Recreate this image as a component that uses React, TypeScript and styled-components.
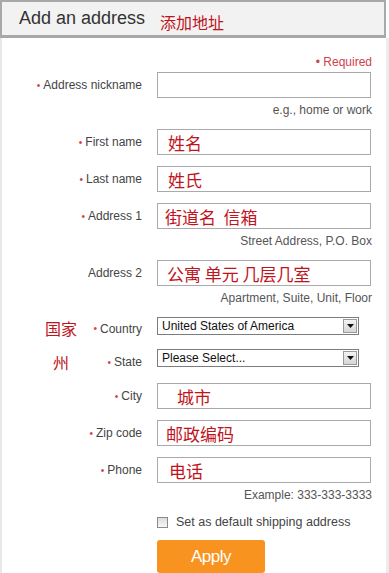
import styled, { createGlobalStyle } from "styled-components";

const GlobalStyle = createGlobalStyle`
  html, body {
    margin: 0;
    padding: 0;
    background: #ffffff;
  }
  body {
    font-family: "Liberation Sans", Arial, sans-serif;
    color: #444444;
  }
`;

type Field = {
  label: string;
  required?: boolean;
  value?: string;
  indent?: number;
  hint?: string;
  top: number;
};

const fields: Field[] = [
  { label: "Address nickname", required: true, hint: "e.g., home or work", top: 3 },
  { label: "First name", required: true, value: "姓名", indent: 10, top: 11 },
  { label: "Last name", required: true, value: "姓氏", indent: 10, top: 11 },
  {
    label: "Address 1",
    required: true,
    value: "街道名  信箱",
    indent: 7,
    hint: "Street Address, P.O. Box",
    top: 11,
  },
  {
    label: "Address 2",
    value: "公寓 单元 几层几室",
    indent: 9,
    hint: "Apartment, Suite, Unit, Floor",
    top: 11,
  },
];

const lowerFields: Field[] = [
  { label: "City", required: true, value: "城市", indent: 19, top: 15 },
  { label: "Zip code", required: true, value: "邮政编码", indent: 8, top: 11 },
  {
    label: "Phone",
    required: true,
    value: "电话",
    indent: 11,
    hint: "Example: 333-333-3333",
    top: 11,
  },
];

function TextRow({ field }: { field: Field }) {
  return (
    <>
      <Row $top={field.top}>
        <Label>
          {field.required && <Dot>•</Dot>}
          {field.label}
        </Label>
        <Input $indent={field.indent ?? 6}>{field.value}</Input>
      </Row>
      {field.hint && <Hint>{field.hint}</Hint>}
    </>
  );
}

function ArrowIcon() {
  return (
    <svg width="7" height="4" viewBox="0 0 7 4">
      <path d="M0 0h7L3.5 4z" fill="#111" />
    </svg>
  );
}

export default function App() {
  return (
    <>
      <GlobalStyle />
      <Panel>
        <Header>
          <Title>Add an address</Title>
          <Note $size={16}>添加地址</Note>
        </Header>
        <Body>
          <Required>• Required</Required>
          {fields.map((f) => (
            <TextRow key={f.label} field={f} />
          ))}
          <SelectRow $top={12}>
            <Label $drop={3}>
              <Side>国家</Side>
              <Dot>•</Dot>Country
            </Label>
            <Select>
              <span>United States of America</span>
              <ArrowBox>
                <ArrowIcon />
              </ArrowBox>
            </Select>
          </SelectRow>
          <SelectRow $top={14}>
            <Label $drop={5}>
              <Side $shift={8}>州</Side>
              <Dot>•</Dot>State
            </Label>
            <Select>
              <span>Please Select...</span>
              <ArrowBox>
                <ArrowIcon />
              </ArrowBox>
            </Select>
          </SelectRow>
          {lowerFields.map((f) => (
            <TextRow key={f.label} field={f} />
          ))}
          <CheckRow>
            <CheckBox />
            <span>Set as default shipping address</span>
          </CheckRow>
          <ButtonRow>
            <ApplyButton>Apply</ApplyButton>
          </ButtonRow>
        </Body>
      </Panel>
    </>
  );
}

const Panel = styled.div`
  width: 389px;
  min-height: 573px;
  box-sizing: border-box;
  display: flex;
  flex-direction: column;
`;

const Header = styled.div`
  width: 386px;
  height: 38px;
  box-sizing: border-box;
  border: 2px solid #a8a8a8;
  border-bottom-width: 3px;
  background: #f2f2f2;
  display: flex;
  align-items: center;
  padding: 2px 0 0 17px;
`;

const Title = styled.span`
  font-size: 18px;
  color: #333333;
  width: 141px;
  margin-top: -2px;
`;

const Note = styled.span<{ $size: number }>`
  font-family: "Noto Sans CJK SC", sans-serif;
  font-size: ${(p) => p.$size}px;
  color: #c0141c;
  line-height: 1;
  margin-top: 5px;
`;

const Body = styled.div`
  flex: 1;
  width: 389px;
  box-sizing: border-box;
  border-left: 2px solid #e8e8e8;
  border-right: 3px solid #ececec;
  padding: 17px 14px 0 0;
  display: flex;
  flex-direction: column;
`;

const Required = styled.div`
  text-align: right;
  font-size: 12px;
  line-height: 14px;
  color: #d0424a;
`;

const Row = styled.div<{ $top: number }>`
  display: grid;
  grid-template-columns: 140px 214px;
  column-gap: 15px;
  margin-top: ${(p) => p.$top}px;
  height: 26px;
`;

const SelectRow = styled(Row)`
  height: 18px;
`;

const Label = styled.div<{ $drop?: number }>`
  position: relative;
  display: flex;
  justify-content: flex-end;
  align-items: center;
  font-size: 12px;
  color: #444444;
  padding-top: ${(p) => p.$drop ?? 0}px;
`;

const Dot = styled.span`
  color: #d0424a;
  font-size: 10px;
  margin-right: 3px;
`;

const Side = styled.span<{ $shift?: number }>`
  position: absolute;
  left: ${(p) => 43 + (p.$shift ?? 0)}px;
  top: ${(p) => (p.$shift ? 4 : 2)}px;
  font-family: "Noto Sans CJK SC", sans-serif;
  font-size: 16px;
  color: #c0141c;
  line-height: 1;
`;

const Input = styled.div<{ $indent: number }>`
  box-sizing: border-box;
  height: 26px;
  border: 1px solid #aaaaaa;
  padding-left: ${(p) => p.$indent}px;
  font-family: "Noto Sans CJK SC", sans-serif;
  font-size: 17px;
  line-height: 25px;
  color: #c0141c;
  white-space: pre;
  overflow: hidden;
`;

const Hint = styled.div`
  text-align: right;
  font-size: 12px;
  line-height: 15px;
  margin-top: 5px;
  color: #555555;
`;

const Select = styled.div`
  box-sizing: border-box;
  width: 202px;
  height: 18px;
  border: 1px solid #7c7c7c;
  display: flex;
  align-items: center;
  justify-content: space-between;
  font-size: 12px;
  color: #111111;
  padding: 0 1px 0 4px;
  margin-top: -1px;
`;

const ArrowBox = styled.span`
  width: 14px;
  height: 14px;
  box-sizing: border-box;
  border: 1px solid #9a9a9a;
  background: linear-gradient(#f4f4f4, #d6d6d6);
  display: flex;
  align-items: center;
  justify-content: center;
`;

const CheckRow = styled.div`
  display: flex;
  align-items: center;
  gap: 8px;
  margin: 12px 0 0 155px;
  font-size: 12.5px;
  line-height: 14px;
  color: #444444;
`;

const CheckBox = styled.span`
  width: 11px;
  height: 11px;
  box-sizing: border-box;
  border: 1px solid #8a8a8a;
  background: linear-gradient(#dcdcdc, #f8f8f8);
`;

const ButtonRow = styled.div`
  margin: 11px 0 0 155px;
`;

const ApplyButton = styled.button`
  width: 108px;
  height: 33px;
  border: none;
  border-radius: 3px;
  background: #f7931e;
  color: #ffffff;
  font-family: "Liberation Sans", Arial, sans-serif;
  font-size: 17px;
  letter-spacing: -0.5px;
  padding: 0;
  cursor: pointer;
`;
